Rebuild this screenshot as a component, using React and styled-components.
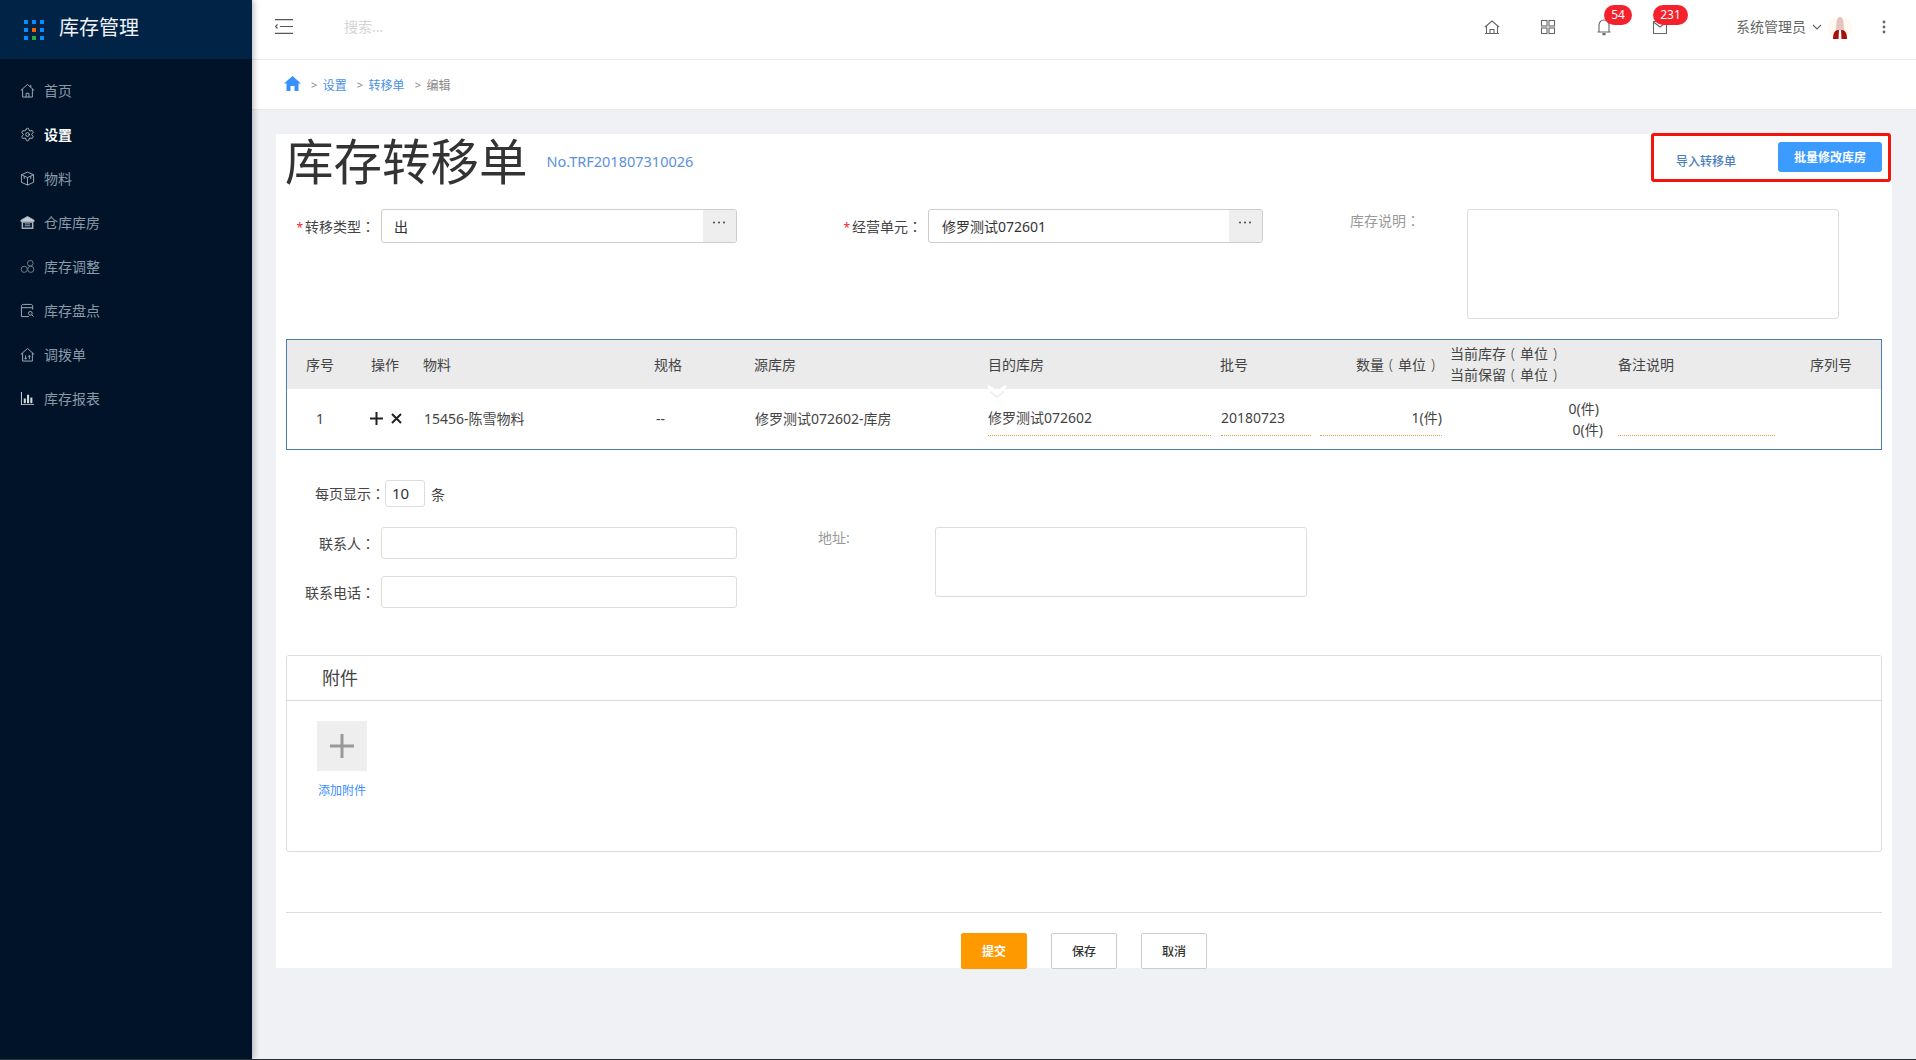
import React from 'react';
import styled, { createGlobalStyle } from 'styled-components';
import { Settings } from 'lucide-react';

const Global = createGlobalStyle`
  html, body { margin: 0; padding: 0; background: #f0f1f5; }
  * { box-sizing: border-box; }
  body { font-family: "Noto Sans", "Noto Sans CJK SC", sans-serif; font-size: 14px; color: #333; }
`;

const Page = styled.div`
  display: flex; width: 1916px; height: 1060px; overflow: hidden;
  border-bottom: 1px solid #2a2f36; background: #f0f1f5;
`;
const Fw = styled.span`font-family: "Noto Sans CJK TC", sans-serif;`;
const Paren = styled.span`display: inline-block; width: 14px; text-align: center; font-weight: 300;`;
const Sidebar = styled.aside`
  width: 252px; flex: none; background: #001328; box-shadow: 2px 0 6px rgba(0,0,0,.25); z-index: 2;
`;
const Brand = styled.div`
  height: 59px; background: #012346; display: flex; align-items: center; padding-left: 24px; gap: 15px;
`;
const BrandTitle = styled.span`font-size: 20px; color: #eef2f6; line-height: 1; margin-top: -4px;`;
const Menu = styled.nav`padding-top: 9px; display: flex; flex-direction: column;`;
const MenuItem = styled.div`
  height: 44px; display: flex; align-items: center; padding-left: 20px; gap: 9px; font-size: 14px;
  color: ${p => (p.$active ? '#fff' : '#8b9aa8')}; font-weight: ${p => (p.$active ? 700 : 400)};
  svg { flex: none; width: 15px; height: 15px; }
`;
const MenuIcon = styled.svg`fill: none; stroke: #a8b2bc; stroke-width: 1;`;
const Main = styled.main`flex: 1; display: flex; flex-direction: column; min-width: 0;`;
const Header = styled.header`
  height: 60px; flex: none; background: #fff; border-bottom: 1px solid #e9e9ec; display: flex; align-items: center;
  padding-left: 23px;
`;
const MenuToggle = styled.svg`width: 18px; height: 15px; margin-top: -6px; fill: none; stroke: #555; stroke-width: 1.2;`;
const Search = styled.span`margin-left: 51px; color: #d4d4d4; font-size: 14px; margin-top: -5px; line-height: 20px;`;
const HeaderRight = styled.div`margin-left: auto; display: flex; align-items: center; height: 100%;`;
const HeadIcon = styled.div`
  position: relative; width: 16px; height: 18px; margin-left: ${p => p.$ml}px; margin-top: -6px;
  svg { display: block; width: 16px; height: 18px; fill: none; stroke: #666; stroke-width: 1.1; }
`;
const Badge = styled.span`
  position: absolute; top: -13px; left: ${p => p.$left}px; height: 20px; width: ${p => p.$w}px; border-radius: 10px;
  background: #f5222d; color: #fff; font-size: 12px; line-height: 20px; text-align: center;
`;
const UserName = styled.span`margin-left: 68px; color: #666; font-size: 14px; margin-top: -6px; line-height: 20px;`;
const UserChevron = styled.svg`
  width: 10px; height: 6px; margin-left: 6px; margin-top: -6px; fill: none; stroke: #666; stroke-width: 1.1;
`;
const Avatar = styled.svg`width: 24px; height: 24px; margin-left: 6px; margin-top: -4px;`;
const Dots = styled.svg`width: 4px; height: 14px; margin-left: 30px; margin-right: 30px; margin-top: -6px; fill: #666;`;
const Crumbs = styled.div`
  height: 50px; flex: none; background: #fff; border-bottom: 1px solid #e7e7ea; display: flex; align-items: center;
  padding-left: 32px; font-size: 12px; color: #888;
`;
const CrumbHome = styled.svg`width: 17px; height: 15px; fill: #3a8fff; margin-top: -3px;`;
const CrumbSep = styled.span`margin: 0 5.5px 0 10px; color: #888; font-size: 11px;`;
const CrumbLink = styled.span`color: ${p => (p.$muted ? '#888' : '#4a8fe8')};`;
const Card = styled.section`
  margin: 24px 24px 0; height: 834px; background: #fff; padding: 0 10px; display: flex; flex-direction: column;
`;
const TitleRow = styled.div`height: 75px; display: flex; align-items: flex-start; flex: none;`;
const Title = styled.h1`
  margin: -2px 0 0 -1px; font-weight: 400; font-size: 48.500px; line-height: 58px; color: #333; white-space: nowrap;
`;
const DocNo = styled.span`font-size: 14.500px; color: #5c8fe0; margin: 17px 0 0 19px; line-height: 20px;`;
const ActionBox = styled.div`
  margin: -1px -9px 0 auto; width: 240px; height: 49px; border: 3px solid #f5130a; border-radius: 3px;
  display: flex; align-items: flex-start; padding: 6px 6px 0 22px; justify-content: space-between;
`;
const ImportLink = styled.span`font-size: 12px; color: #4a7fbe; font-weight: 500; margin-top: 11px; line-height: 18px;`;
const BatchBtn = styled.span`
  width: 104px; height: 30px; border-radius: 3px; background: #3b9bff; color: #fff; font-size: 12px; font-weight: 700;
  display: flex; align-items: center; justify-content: center;
`;
const FormRow = styled.div`height: 130px; display: flex; align-items: flex-start; flex: none;`;
const Label = styled.label`
  width: ${p => p.$w}px; flex: none; text-align: right; padding-right: 6px; line-height: 34px; font-size: 14px; color: #444; white-space: nowrap;
  em { color: #f5222d; font-style: normal; font-size: 12px; margin-right: 2px; }
`;
const GreyLabel = styled.span`
  flex: none; color: #999; font-size: 14px; margin-left: ${p => p.$ml}px; width: ${p => p.$w}px; line-height: 22px; white-space: nowrap;
`;
const PickInput = styled.div`
  width: ${p => p.$w}px; height: 34px; flex: none; border: 1px solid #ccc; border-radius: 3px; display: flex; overflow: hidden;
`;
const PickValue = styled.div`flex: 1; padding-left: ${p => p.$pl}px; line-height: 33px; font-size: 14px; color: #333;`;
const PickAddon = styled.div`
  width: 33px; background: #eee; display: flex; justify-content: center; padding: 11px 2px 0 0;
`;
const DotsH = styled.svg`width: 16px; height: 3px; fill: #555;`;
const TextArea = styled.div`
  flex: none; width: ${p => p.$w}px; height: ${p => p.$h}px; border: 1px solid #ddd; border-radius: 3px; background: #fff;
`;
const Table = styled.div`
  height: 111px; flex: none; border: 1px solid #4a7db5; font-size: 14px; color: #444;
`;
const GridRow = styled.div`
  display: grid; grid-template-columns: 65px 52px 231px 100px 234px 232px 136px 94px 168px 192px 1fr;
  height: ${p => p.$h}px; background: ${p => p.$bg};
  padding-left: 19px; padding-bottom: ${p => p.$pb || 0}px; align-items: center; position: relative;
`;
const HeadCell = styled.div`line-height: 21px; white-space: nowrap; margin-top: ${p => p.$mt || 0}px;`;
const Cell = styled.div`white-space: nowrap; color: #444; padding-left: ${p => p.$pl || 0}px;`;
const OpCell = styled.div`display: flex; align-items: center; gap: 7px; margin-left: -1px;`;
const OpIcon = styled.svg`width: 13px; height: 13px; fill: none; stroke: #222; stroke-width: 2;`;
const Editable = styled.div`
  align-self: start; height: 39px; margin-top: 8px; line-height: 41px; border-bottom: 1px dotted #e6a23c; color: #444; white-space: nowrap;
  width: ${p => p.$w}px; margin-left: ${p => p.$ml || 0}px; text-align: ${p => p.$align || 'left'};
`;
const StockCell = styled.div`
  display: flex; flex-direction: column; align-items: flex-end; width: 153px; line-height: 21px; padding-top: 2px; color: #444;
`;
const StockLine = styled.span`margin-right: ${p => p.$mr}px;`;
const Chevron = styled.svg`
  position: absolute; left: 700px; top: 45px; width: 20px; height: 13px; fill: none; z-index: 1;
`;
const PagerRow = styled.div`
  display: flex; align-items: center; margin: 30px 0 0 29px; height: 27px; flex: none; font-size: 14px; color: #444;
`;
const PagerLabel = styled.span`margin-top: -2px;`;
const PagerInput = styled.div`
  width: 40px; height: 27px; border: 1px solid #ddd; border-radius: 3px; padding-left: 6px; line-height: 24px; font-size: 15px; color: #333;
`;
const PagerUnit = styled.span`margin-left: 6px;`;
const ContactRow = styled.div`display: flex; margin-top: 20px; align-items: flex-start; flex: none;`;
const ContactFields = styled.div`display: flex; flex-direction: column; gap: 17px;`;
const ContactField = styled.div`display: flex; height: 32px;`;
const ContactLabel = styled.label`
  width: 95px; height: 32px; text-align: right; padding-right: 6px; line-height: 32px; color: #444; white-space: nowrap;
`;
const PlainInput = styled.div`width: 356px; height: 32px; border: 1px solid #ddd; border-radius: 3px;`;
const AttachPanel = styled.div`
  margin-top: 47px; height: 197px; flex: none; border: 1px solid #ddd; border-radius: 3px;
`;
const AttachHead = styled.div`
  height: 45px; border-bottom: 1px solid #ddd; padding-left: 35px; font-size: 18px; line-height: 44px; color: #444;
`;
const AttachBody = styled.div`padding: 20px 0 0 30px; width: 82px; display: flex; flex-direction: column; align-items: flex-start;`;
const AddBox = styled.div`
  width: 50px; height: 50px; background: #eee; display: flex; align-items: center; justify-content: center;
`;
const AddPlus = styled.svg`width: 24px; height: 24px; stroke: #999; stroke-width: 3; fill: none;`;
const AddText = styled.span`font-size: 12px; color: #3a8fff; margin: 11px 0 0 1px; line-height: 18px; white-space: nowrap;`;
const Divider = styled.div`margin-top: 60px; height: 1px; background: #ddd; flex: none;`;
const Footer = styled.div`display: flex; margin: 20px 0 0 675px; gap: 24px; flex: none;`;
const FootBtn = styled.span`
  width: 66px; height: 36px; border-radius: 2px; font-size: 12px; font-weight: ${p => (p.$primary ? 700 : 500)};
  display: flex; align-items: center; justify-content: center;
  background: ${p => (p.$primary ? '#ff9900' : '#fff')}; color: ${p => (p.$primary ? '#fff' : '#333')};
  border: 1px solid ${p => (p.$primary ? '#ff9900' : '#ccc')};
`;

const Logo = () => (
  <svg width="20" height="20" viewBox="0 0 20 20">
    {[0, 1, 2].flatMap(r => [0, 1, 2].map(c => (
      <rect key={`${r}${c}`} x={c * 8} y={r * 8} width="4" height="4"
        fill={r === 1 && c === 1 ? '#f5640a' : r === 2 && c === 1 ? '#2aa84a' : '#0a8cff'} />
    )))}
  </svg>
);

const icons = [
  <path key="a" d="M.8 8 8 1.500 15.200 8M2.800 6.500V15h10.400V6.500M6.500 15v-4h3v4M11.500 2v2.500" />,
  null,
  <path key="c" d="M8 1.200 14.500 4v8L8 15 1.500 12V4zM1.500 4 8 7l6.500-3M8 7v8M4.500 5.500v3M11.500 5.500v3" />,
  <g key="d"><path d="M8 1.500 15 5.500v1.500H1V5.500z" fill="#c6ccd2" /><path d="M2.500 7.500h11V14h-11z" strokeWidth="1.6" /><path d="M5 9.500h6M5 11.500h6" /></g>,
  <g key="e" opacity=".7"><circle cx="11" cy="4.500" r="3" /><circle cx="4.500" cy="11" r="3.300" /><circle cx="11.500" cy="11" r="3.300" /></g>,
  <g key="f"><path d="M13.500 7V3.500c0-1.500-1-2-2-2h-8c-1 0-2 .5-2 2v11h8M1.500 5h12" /><circle cx="11" cy="11" r="2" /><path d="M12.500 12.500l2 2" /></g>,
  <path key="g" d="M.8 8 8 1.500 15.200 8M2.800 6.500V15h10.400V6.500M6 9v4M4.800 11.800 6 13l1.200-1.200M10 13V9M8.800 10.200 10 9l1.200 1.200" />,
  <g key="h" fill="#d6dbe0" stroke="none"><path d="M1 1h1v13h13v1H1z" /><rect x="4" y="8" width="2.200" height="5" /><rect x="7.500" y="4" width="2.200" height="9" /><rect x="11" y="7" width="2.200" height="6" /></g>,
];
const menu = ['首页', '设置', '物料', '仓库库房', '库存调整', '库存盘点', '调拨单', '库存报表'];

const AddonDots = () => (
  <DotsH viewBox="0 0 16 3"><circle cx="3" cy="1.500" r="1.100" /><circle cx="8" cy="1.500" r="1.100" /><circle cx="13" cy="1.500" r="1.100" /></DotsH>
);

export default function App() {
  return (
    <Page>
      <Global />
      <Sidebar>
        <Brand><Logo /><BrandTitle>库存管理</BrandTitle></Brand>
        <Menu>
          {menu.map((m, i) => (
            <MenuItem key={m} $active={i === 1}>
              {i === 1
                ? <Settings color="#c8ced4" strokeWidth={1.4} />
                : <MenuIcon viewBox="0 0 16 16">{icons[i]}</MenuIcon>}
              {m}
            </MenuItem>
          ))}
        </Menu>
      </Sidebar>
      <Main>
        <Header>
          <MenuToggle viewBox="0 0 18 15"><path d="M0 .6h18M5 7.500h13M0 14.400h18M2.500 5.500.5 7.500l2 2" /></MenuToggle>
          <Search>搜索...</Search>
          <HeaderRight>
            <HeadIcon $ml={0}>
              <svg viewBox="0 0 16 18"><path d="M1 9 8 3l7 6M2.500 8v7.500h11V8M1 15.500h14M6 15.500v-4h4v4" /></svg>
            </HeadIcon>
            <HeadIcon $ml={40}>
              <svg viewBox="0 0 16 18"><rect x="1.500" y="2.500" width="5.500" height="5.500" /><rect x="9" y="2.500" width="5.500" height="5.500" /><rect x="1.500" y="10" width="5.500" height="5.500" /><rect x="9" y="10" width="5.500" height="5.500" /></svg>
            </HeadIcon>
            <HeadIcon $ml={40}>
              <svg viewBox="0 0 16 18"><path d="M3 14V7a5 5 0 0 1 10 0v7M1.500 14h13M7 15.500h2v1.200H7z" /></svg>
              <Badge $left={8} $w={28}>54</Badge>
            </HeadIcon>
            <HeadIcon $ml={40}>
              <svg viewBox="0 0 16 18"><path d="M1.500 3.500h13v12h-13zM1.500 4l6.500 5 6.500-5" /></svg>
              <Badge $left={1} $w={35}>231</Badge>
            </HeadIcon>
            <UserName>系统管理员</UserName>
            <UserChevron viewBox="0 0 10 6"><path d="M1 1l4 4 4-4" /></UserChevron>
            <Avatar viewBox="0 0 24 24">
              <circle cx="12" cy="12" r="12" fill="#fffaf0" />
              <path d="M8.500 6c0-3 1.500-5 3.500-5s3.500 2 3.500 5l.5 8H8z" fill="#e3c4c0" />
              <path d="M5 23c0-6 2-9 5-9h4c3 0 5 3 5 9z" fill="#a80f0f" />
              <path d="M11 14h2l.5 9h-3z" fill="#fff" />
            </Avatar>
            <Dots viewBox="0 0 4 14"><circle cx="2" cy="2" r="1.400" /><circle cx="2" cy="7" r="1.400" /><circle cx="2" cy="12" r="1.400" /></Dots>
          </HeaderRight>
        </Header>
        <Crumbs>
          <CrumbHome viewBox="0 0 17 15"><path d="M8.500 0 0 7.500h2.500V15h4v-5h4v5h4V7.500H17z" /></CrumbHome>
          <CrumbSep>&gt;</CrumbSep><CrumbLink>设置</CrumbLink>
          <CrumbSep>&gt;</CrumbSep><CrumbLink>转移单</CrumbLink>
          <CrumbSep>&gt;</CrumbSep><CrumbLink $muted>编辑</CrumbLink>
        </Crumbs>
        <Card>
          <TitleRow>
            <Title>库存转移单</Title>
            <DocNo>No.TRF201807310026</DocNo>
            <ActionBox>
              <ImportLink>导入转移单</ImportLink>
              <BatchBtn>批量修改库房</BatchBtn>
            </ActionBox>
          </TitleRow>
          <FormRow>
            <Label $w={95}><em>*</em>转移类型<Fw>：</Fw></Label>
            <PickInput $w={356}><PickValue $pl={12}>出</PickValue><PickAddon><AddonDots /></PickAddon></PickInput>
            <Label $w={191}><em>*</em>经营单元<Fw>：</Fw></Label>
            <PickInput $w={335}><PickValue $pl={13}>修罗测试072601</PickValue><PickAddon><AddonDots /></PickAddon></PickInput>
            <GreyLabel $ml={87} $w={117}>库存说明<Fw>：</Fw></GreyLabel>
            <TextArea $w={372} $h={110} />
          </FormRow>
          <Table>
            <GridRow $h={49} $bg="#ebebeb">
              <HeadCell>序号</HeadCell>
              <HeadCell>操作</HeadCell>
              <HeadCell>物料</HeadCell>
              <HeadCell>规格</HeadCell>
              <HeadCell>源库房</HeadCell>
              <HeadCell>目的库房</HeadCell>
              <HeadCell>批号</HeadCell>
              <HeadCell>数量<Paren>(</Paren>单位<Paren>)</Paren></HeadCell>
              <HeadCell $mt={-2}>当前库存<Paren>(</Paren>单位<Paren>)</Paren><br />当前保留<Paren>(</Paren>单位<Paren>)</Paren></HeadCell>
              <HeadCell>备注说明</HeadCell>
              <HeadCell>序列号</HeadCell>
              <Chevron viewBox="0 0 20 13">
                <path d="M3 6.500l7 5.500 7-5.500" stroke="#f0f0f0" strokeWidth="2" />
                <path d="M1 1l9 7 9-7" stroke="#fff" strokeWidth="3" />
              </Chevron>
            </GridRow>
            <GridRow $h={60} $bg="#fff" $pb={2}>
              <Cell $pl={10}>1</Cell>
              <OpCell>
                <OpIcon viewBox="0 0 13 13"><path d="M6.500 0v13M0 6.500h13" /></OpIcon>
                <OpIcon viewBox="0 0 13 13"><path d="M2 2l9 9M11 2l-9 9" /></OpIcon>
              </OpCell>
              <Cell $pl={1}>15456-陈雪物料</Cell>
              <Cell $pl={2}>--</Cell>
              <Cell $pl={1}>修罗测试072602-库房</Cell>
              <Editable $w={223}>修罗测试072602</Editable>
              <Editable $w={90} $ml={1}>20180723</Editable>
              <Editable $w={122} $ml={-36} $align="right">1(件)</Editable>
              <StockCell>
                <StockLine $mr={4}>0(件)</StockLine>
                <StockLine $mr={0}>0(件)</StockLine>
              </StockCell>
              <Editable $w={157}>&nbsp;</Editable>
              <Cell />
            </GridRow>
          </Table>
          <PagerRow>
            <PagerLabel>每页显示<Fw>：</Fw></PagerLabel><PagerInput>10</PagerInput><PagerUnit>条</PagerUnit>
          </PagerRow>
          <ContactRow>
            <ContactFields>
              <ContactField><ContactLabel>联系人<Fw>：</Fw></ContactLabel><PlainInput /></ContactField>
              <ContactField><ContactLabel>联系电话<Fw>：</Fw></ContactLabel><PlainInput /></ContactField>
            </ContactFields>
            <GreyLabel $ml={81} $w={117}>地址:</GreyLabel>
            <TextArea $w={372} $h={70} />
          </ContactRow>
          <AttachPanel>
            <AttachHead>附件</AttachHead>
            <AttachBody>
              <AddBox><AddPlus viewBox="0 0 24 24"><path d="M12 0v24M0 12h24" /></AddPlus></AddBox>
              <AddText>添加附件</AddText>
            </AttachBody>
          </AttachPanel>
          <Divider />
          <Footer>
            <FootBtn $primary>提交</FootBtn>
            <FootBtn>保存</FootBtn>
            <FootBtn>取消</FootBtn>
          </Footer>
        </Card>
      </Main>
    </Page>
  );
}
